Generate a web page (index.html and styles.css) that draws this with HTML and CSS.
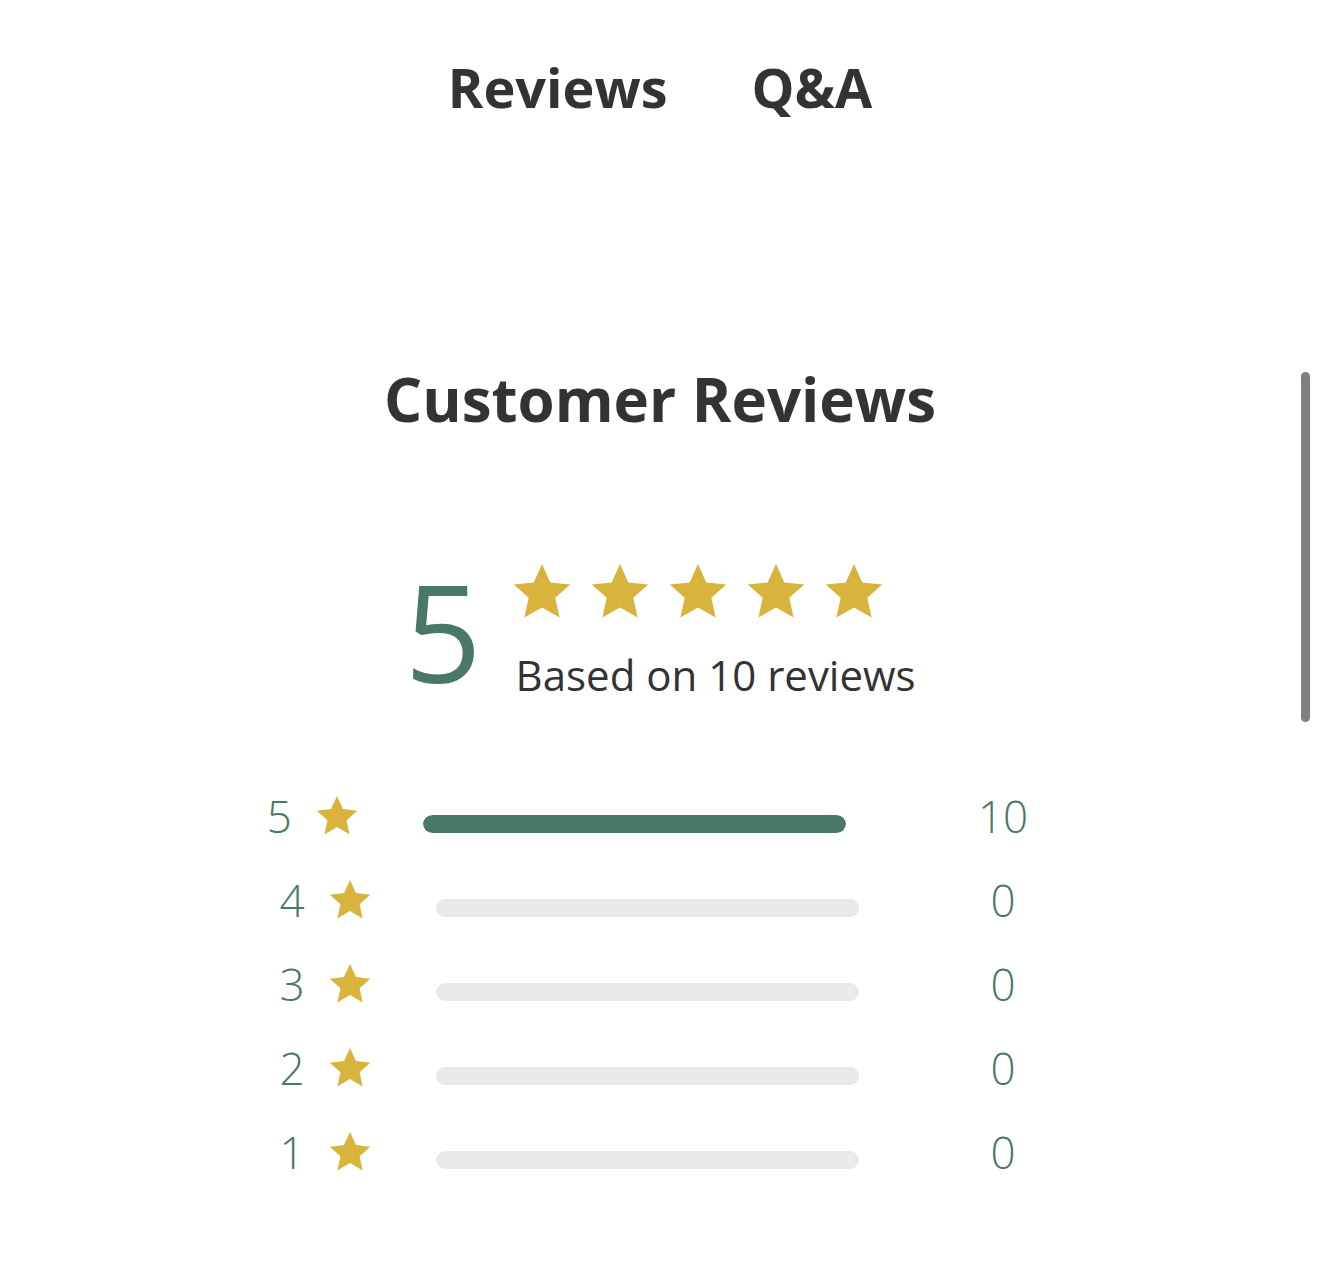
FILE: index.html
```html
<!DOCTYPE html>
<html>
	<head>
		<meta charset="UTF-8">
		<title>Customer Reviews</title>
		<link rel="stylesheet" href="styles.css">
	</head>
	<body>
		<div class="wrap">
			<div class="tabs">
				<span class="tab">Reviews</span>
				<span class="tab">Q&amp;A</span>
			</div>

			<h2 class="title">Customer Reviews</h2>

			<div class="summary">
				<div class="average">5</div>
				<div class="summaryRight">
					<div class="stars">
						<svg class="star big" viewBox="0 0 24 24"><polygon points="12,1.5 15.1,8.4 22.6,9.2 17,14.2 18.6,21.6 12,17.8 5.4,21.6 7,14.2 1.4,9.2 8.9,8.4"/></svg>
						<svg class="star big" viewBox="0 0 24 24"><polygon points="12,1.5 15.1,8.4 22.6,9.2 17,14.2 18.6,21.6 12,17.8 5.4,21.6 7,14.2 1.4,9.2 8.9,8.4"/></svg>
						<svg class="star big" viewBox="0 0 24 24"><polygon points="12,1.5 15.1,8.4 22.6,9.2 17,14.2 18.6,21.6 12,17.8 5.4,21.6 7,14.2 1.4,9.2 8.9,8.4"/></svg>
						<svg class="star big" viewBox="0 0 24 24"><polygon points="12,1.5 15.1,8.4 22.6,9.2 17,14.2 18.6,21.6 12,17.8 5.4,21.6 7,14.2 1.4,9.2 8.9,8.4"/></svg>
						<svg class="star big" viewBox="0 0 24 24"><polygon points="12,1.5 15.1,8.4 22.6,9.2 17,14.2 18.6,21.6 12,17.8 5.4,21.6 7,14.2 1.4,9.2 8.9,8.4"/></svg>
					</div>
					<div class="basedOn">Based on 10 reviews</div>
				</div>
			</div>

			<ul class="bars">
				<li class="barRow">
					<span class="rowNum">5</span>
					<svg class="star small" viewBox="0 0 24 24"><polygon points="12,1.5 15.1,8.4 22.6,9.2 17,14.2 18.6,21.6 12,17.8 5.4,21.6 7,14.2 1.4,9.2 8.9,8.4"/></svg>
					<div class="track"><div class="fill" style="width: 100%"></div></div>
					<span class="rowCount">10</span>
				</li>
				<li class="barRow">
					<span class="rowNum">4</span>
					<svg class="star small" viewBox="0 0 24 24"><polygon points="12,1.5 15.1,8.4 22.6,9.2 17,14.2 18.6,21.6 12,17.8 5.4,21.6 7,14.2 1.4,9.2 8.9,8.4"/></svg>
					<div class="track"><div class="fill" style="width: 0%"></div></div>
					<span class="rowCount">0</span>
				</li>
				<li class="barRow">
					<span class="rowNum">3</span>
					<svg class="star small" viewBox="0 0 24 24"><polygon points="12,1.5 15.1,8.4 22.6,9.2 17,14.2 18.6,21.6 12,17.8 5.4,21.6 7,14.2 1.4,9.2 8.9,8.4"/></svg>
					<div class="track"><div class="fill" style="width: 0%"></div></div>
					<span class="rowCount">0</span>
				</li>
				<li class="barRow">
					<span class="rowNum">2</span>
					<svg class="star small" viewBox="0 0 24 24"><polygon points="12,1.5 15.1,8.4 22.6,9.2 17,14.2 18.6,21.6 12,17.8 5.4,21.6 7,14.2 1.4,9.2 8.9,8.4"/></svg>
					<div class="track"><div class="fill" style="width: 0%"></div></div>
					<span class="rowCount">0</span>
				</li>
				<li class="barRow">
					<span class="rowNum">1</span>
					<svg class="star small" viewBox="0 0 24 24"><polygon points="12,1.5 15.1,8.4 22.6,9.2 17,14.2 18.6,21.6 12,17.8 5.4,21.6 7,14.2 1.4,9.2 8.9,8.4"/></svg>
					<div class="track"><div class="fill" style="width: 0%"></div></div>
					<span class="rowCount">0</span>
				</li>
			</ul>
		</div>
		<div class="scrollThumb"></div>
	</body>
</html>
```

FILE: styles.css
```css
html, body {
	margin: 0;
	padding: 0;
	background: #fff;
	overflow: hidden;
}
body {
	font-family: "Open Sans", "Noto Sans", sans-serif;
	color: #333;
}
ul {
	margin: 0;
	padding: 0;
}
li {
	list-style: none;
}
.wrap {
	width: 1320px;
	height: 1263px;
}
.tabs {
	display: flex;
	justify-content: center;
	gap: 84px;
	padding-top: 60px;
}
.tab {
	font-size: 54px;
	line-height: 54px;
	font-weight: 700;
	color: #333;
}
.title {
	margin: 255px 0 0;
	text-align: center;
	font-size: 60px;
	line-height: 60px;
	font-weight: 700;
	color: #333;
}
.summary {
	display: flex;
	justify-content: center;
	align-items: flex-start;
	margin-top: 131px;
}
.average {
	font-size: 135px;
	line-height: 135px;
	font-weight: 400;
	color: #4a7866;
	margin-top: 4px;
}
.summaryRight {
	margin-left: 34px;
}
.stars {
	display: flex;
	gap: 14px;
	margin-left: -6px;
}
.star {
	fill: #d8b43c;
	display: block;
}
.star.big {
	width: 64px;
	height: 64px;
}
.basedOn {
	font-size: 42px;
	line-height: 42px;
	margin-top: 30px;
	color: #333;
}
.bars {
	margin-top: 75px;
	padding-right: 25px;
}
.barRow {
	display: flex;
	justify-content: center;
	align-items: center;
	height: 84px;
}
.rowNum {
	font-size: 44px;
	line-height: 44px;
	font-weight: 300;
	color: #4a7866;
}
.star.small {
	width: 46px;
	height: 46px;
	margin-left: 22px;
}
.track {
	width: 423px;
	height: 18px;
	border-radius: 9px;
	background: #e9e9e9;
	margin-left: 63px;
	margin-top: 16px;
	overflow: hidden;
}
.fill {
	height: 100%;
	background: #4a7866;
	border-radius: 9px;
}
.rowCount {
	font-size: 44px;
	line-height: 44px;
	font-weight: 300;
	color: #4a7866;
	margin-left: 132px;
}
.scrollThumb {
	position: absolute;
	top: 372px;
	left: 1301px;
	width: 9px;
	height: 350px;
	border-radius: 5px;
	background: #808080;
}
```
